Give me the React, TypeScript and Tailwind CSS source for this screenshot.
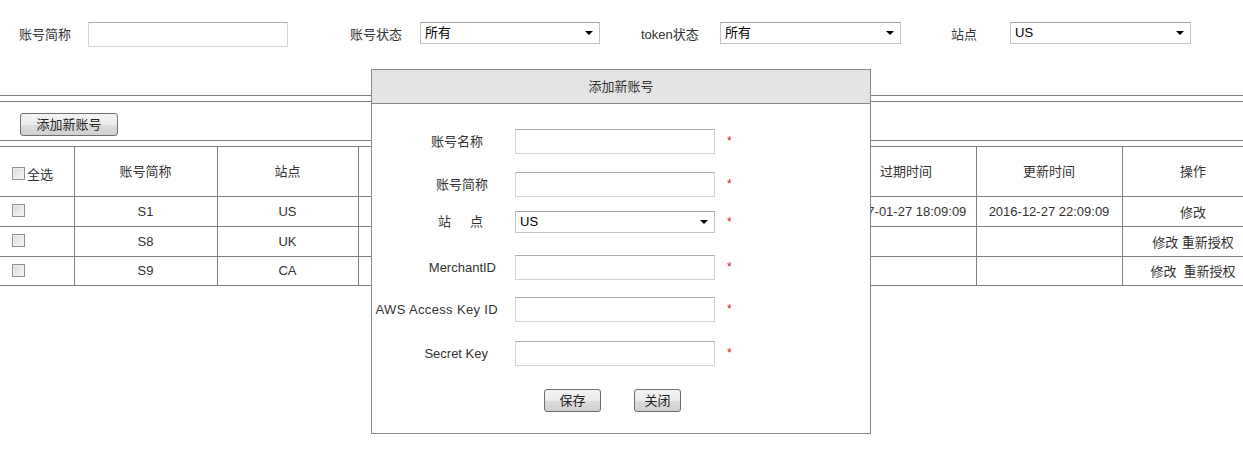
const LINE = 'border-[#7f7f7f]'

// native select with a small black arrow on the right
function Sel({ value, className }: { value: string; className: string }) {
  return (
    <div className={`relative shrink-0 ${className}`}>
      <select
        defaultValue={value}
        className="h-full w-full appearance-none border border-[#c4c4c4] border-t-[#a3a3a3] bg-white pl-[4px] text-[13px] text-black outline-none"
      >
        <option>{value}</option>
      </select>
      <span className="pointer-events-none absolute right-[7px] top-1/2 -translate-y-1/2 border-x-[4px] border-t-[4px] border-x-transparent border-t-black" />
    </div>
  )
}

function TextInput({ className }: { className: string }) {
  return (
    <input
      type="text"
      className={`shrink-0 border border-[#d2d2d2] border-t-[#acacac] bg-white outline-none ${className}`}
    />
  )
}

function Btn({ label, className }: { label: string; className: string }) {
  return (
    <button
      className={`flex shrink-0 items-center justify-center rounded-[3px] border border-[#707070] bg-[linear-gradient(#f3f3f3,#ebebeb_50%,#dddddd_51%,#cfcfcf)] text-[13px] text-[#222] ${className}`}
    >
      {label}
    </button>
  )
}

function Check() {
  return (
    <span className="inline-block h-[13px] w-[13px] shrink-0 border border-[#8e8f8f] bg-[linear-gradient(135deg,#d6d6d6,#fafafa)] shadow-[inset_0_0_0_1px_#f0f0f0]" />
  )
}

const rows = [
  { name: 'S1', site: 'US', expire: '2017-01-27 18:09:09', update: '2016-12-27 22:09:09', ops: '修改', h: 'h-[30px]' },
  { name: 'S8', site: 'UK', expire: '', update: '', ops: '修改 重新授权', h: 'h-[30px]' },
  { name: 'S9', site: 'CA', expire: '', update: '', ops: '修改\u00a0 重新授权', h: 'h-[29px]' },
]

const formRows = [
  { label: '账号名称', pr: 'pr-[32px]', mt: 'mt-[25px]', kind: 'input' },
  { label: '账号简称', pr: 'pr-[27px]', mt: 'mt-[18px]', kind: 'input' },
  { label: '站点', pr: 'pr-[32px]', mt: 'mt-[14px]', kind: 'select' },
  { label: 'MerchantID', pr: 'pr-[19px]', mt: 'mt-[22px]', kind: 'input' },
  { label: 'AWS Access Key ID', pr: 'pr-[17px] tracking-[0.35px]', mt: 'mt-[17px]', kind: 'input' },
  { label: 'Secret Key', pr: 'pr-[27px]', mt: 'mt-[19px]', kind: 'input' },
]

function App() {
  const cell = `border ${LINE} text-center`

  return (
    <div className="relative h-[449px] w-[1243px] overflow-hidden bg-white font-['Liberation_Sans','Noto_Sans_CJK_SC',sans-serif] text-[13px] text-[#333]">
      {/* Search filters */}
      <div className="h-[95px] pt-[22px]">
        <div className="flex h-[25px] items-center">
          <span className="ml-[19px] w-[69px] shrink-0">账号简称</span>
          <TextInput className="h-[25px] w-[200px]" />
          <span className="ml-[62px] w-[70px] shrink-0">账号状态</span>
          <Sel value="所有" className="h-[22px] w-[180px] self-start" />
          <span className="ml-[41px] w-[79px] shrink-0">token状态</span>
          <Sel value="所有" className="h-[22px] w-[181px] self-start" />
          <span className="ml-[50px] w-[59px] shrink-0">站点</span>
          <Sel value="US" className="h-[22px] w-[181px] self-start" />
        </div>
      </div>

      {/* Toolbar */}
      <div className={`h-[6px] border-t ${LINE}`} />
      <div className={`h-[39px] border-t ${LINE} pl-[20px] pt-[11px]`}>
        <Btn label="添加新账号" className="h-[23px] w-[98px]" />
      </div>
      <div className={`h-[6px] border-t ${LINE}`} />

      {/* Account table */}
      <table className="w-[1264px] table-fixed border-collapse">
        <colgroup>
          <col className="w-[74px]" />
          <col className="w-[143px]" />
          <col className="w-[141px]" />
          <col className="w-[160px]" />
          <col className="w-[160px]" />
          <col className="w-[158px]" />
          <col className="w-[140px]" />
          <col className="w-[146px]" />
          <col className="w-[142px]" />
        </colgroup>
        <thead>
          <tr className="h-[50px] font-normal">
            <th className={`border ${LINE} border-l-0 pl-[12px] text-left font-normal`}>
              <div className="flex items-center gap-[2px] pt-[3px]">
                <Check />
                <span className="pt-[4px]">全选</span>
              </div>
            </th>
            <th className={`${cell} font-normal`}>账号简称</th>
            <th className={`${cell} font-normal`}>站点</th>
            <th className={`${cell} font-normal`} />
            <th className={`${cell} font-normal`} />
            <th className={`${cell} font-normal`} />
            <th className={`${cell} font-normal`}>过期时间</th>
            <th className={`${cell} font-normal`}>更新时间</th>
            <th className={`${cell} font-normal`}>操作</th>
          </tr>
        </thead>
        <tbody>
          {rows.map((r) => (
            <tr key={r.name} className={r.h}>
              <td className={`border ${LINE} border-l-0 pl-[12px] pt-[6px] align-top`}>
                <Check />
              </td>
              <td className={cell}>{r.name}</td>
              <td className={cell}>{r.site}</td>
              <td className={cell} />
              <td className={cell} />
              <td className={cell} />
              <td className={`${cell} whitespace-nowrap`}>{r.expire}</td>
              <td className={`${cell} whitespace-nowrap`}>{r.update}</td>
              <td className={`${cell} whitespace-nowrap pt-[2px]`}>{r.ops}</td>
            </tr>
          ))}
        </tbody>
      </table>

      {/* Add account dialog */}
      <div className="absolute left-[371px] top-[69px] h-[365px] w-[500px] border border-[#888] bg-white">
        <div className="flex h-[34px] items-center justify-center border-b border-[#888] bg-[#e4e4e4] text-[#333]">
          添加新账号
        </div>
        {formRows.map((f) => (
          <div
            key={f.label}
            className={`flex items-center ${f.mt} ${f.kind === 'select' ? 'h-[22px]' : 'h-[25px]'}`}
          >
            <div className={`flex w-[143px] shrink-0 justify-end whitespace-nowrap ${f.pr}`}>
              {f.label === '站点' ? (
                <span className="flex gap-[19px]">
                  <span>站</span>
                  <span>点</span>
                </span>
              ) : (
                f.label
              )}
            </div>
            {f.kind === 'select' ? (
              <Sel value="US" className="h-[22px] w-[200px]" />
            ) : (
              <TextInput className="h-[25px] w-[200px]" />
            )}
            <span className="ml-[12px] -mt-[1px] text-[12px] text-[#d0202a]">*</span>
          </div>
        ))}
        <div className="mt-[23px] flex pl-[172px]">
          <Btn label="保存" className="h-[23px] w-[57px]" />
          <Btn label="关闭" className="ml-[33px] h-[23px] w-[47px]" />
        </div>
      </div>
    </div>
  )
}

export default App
